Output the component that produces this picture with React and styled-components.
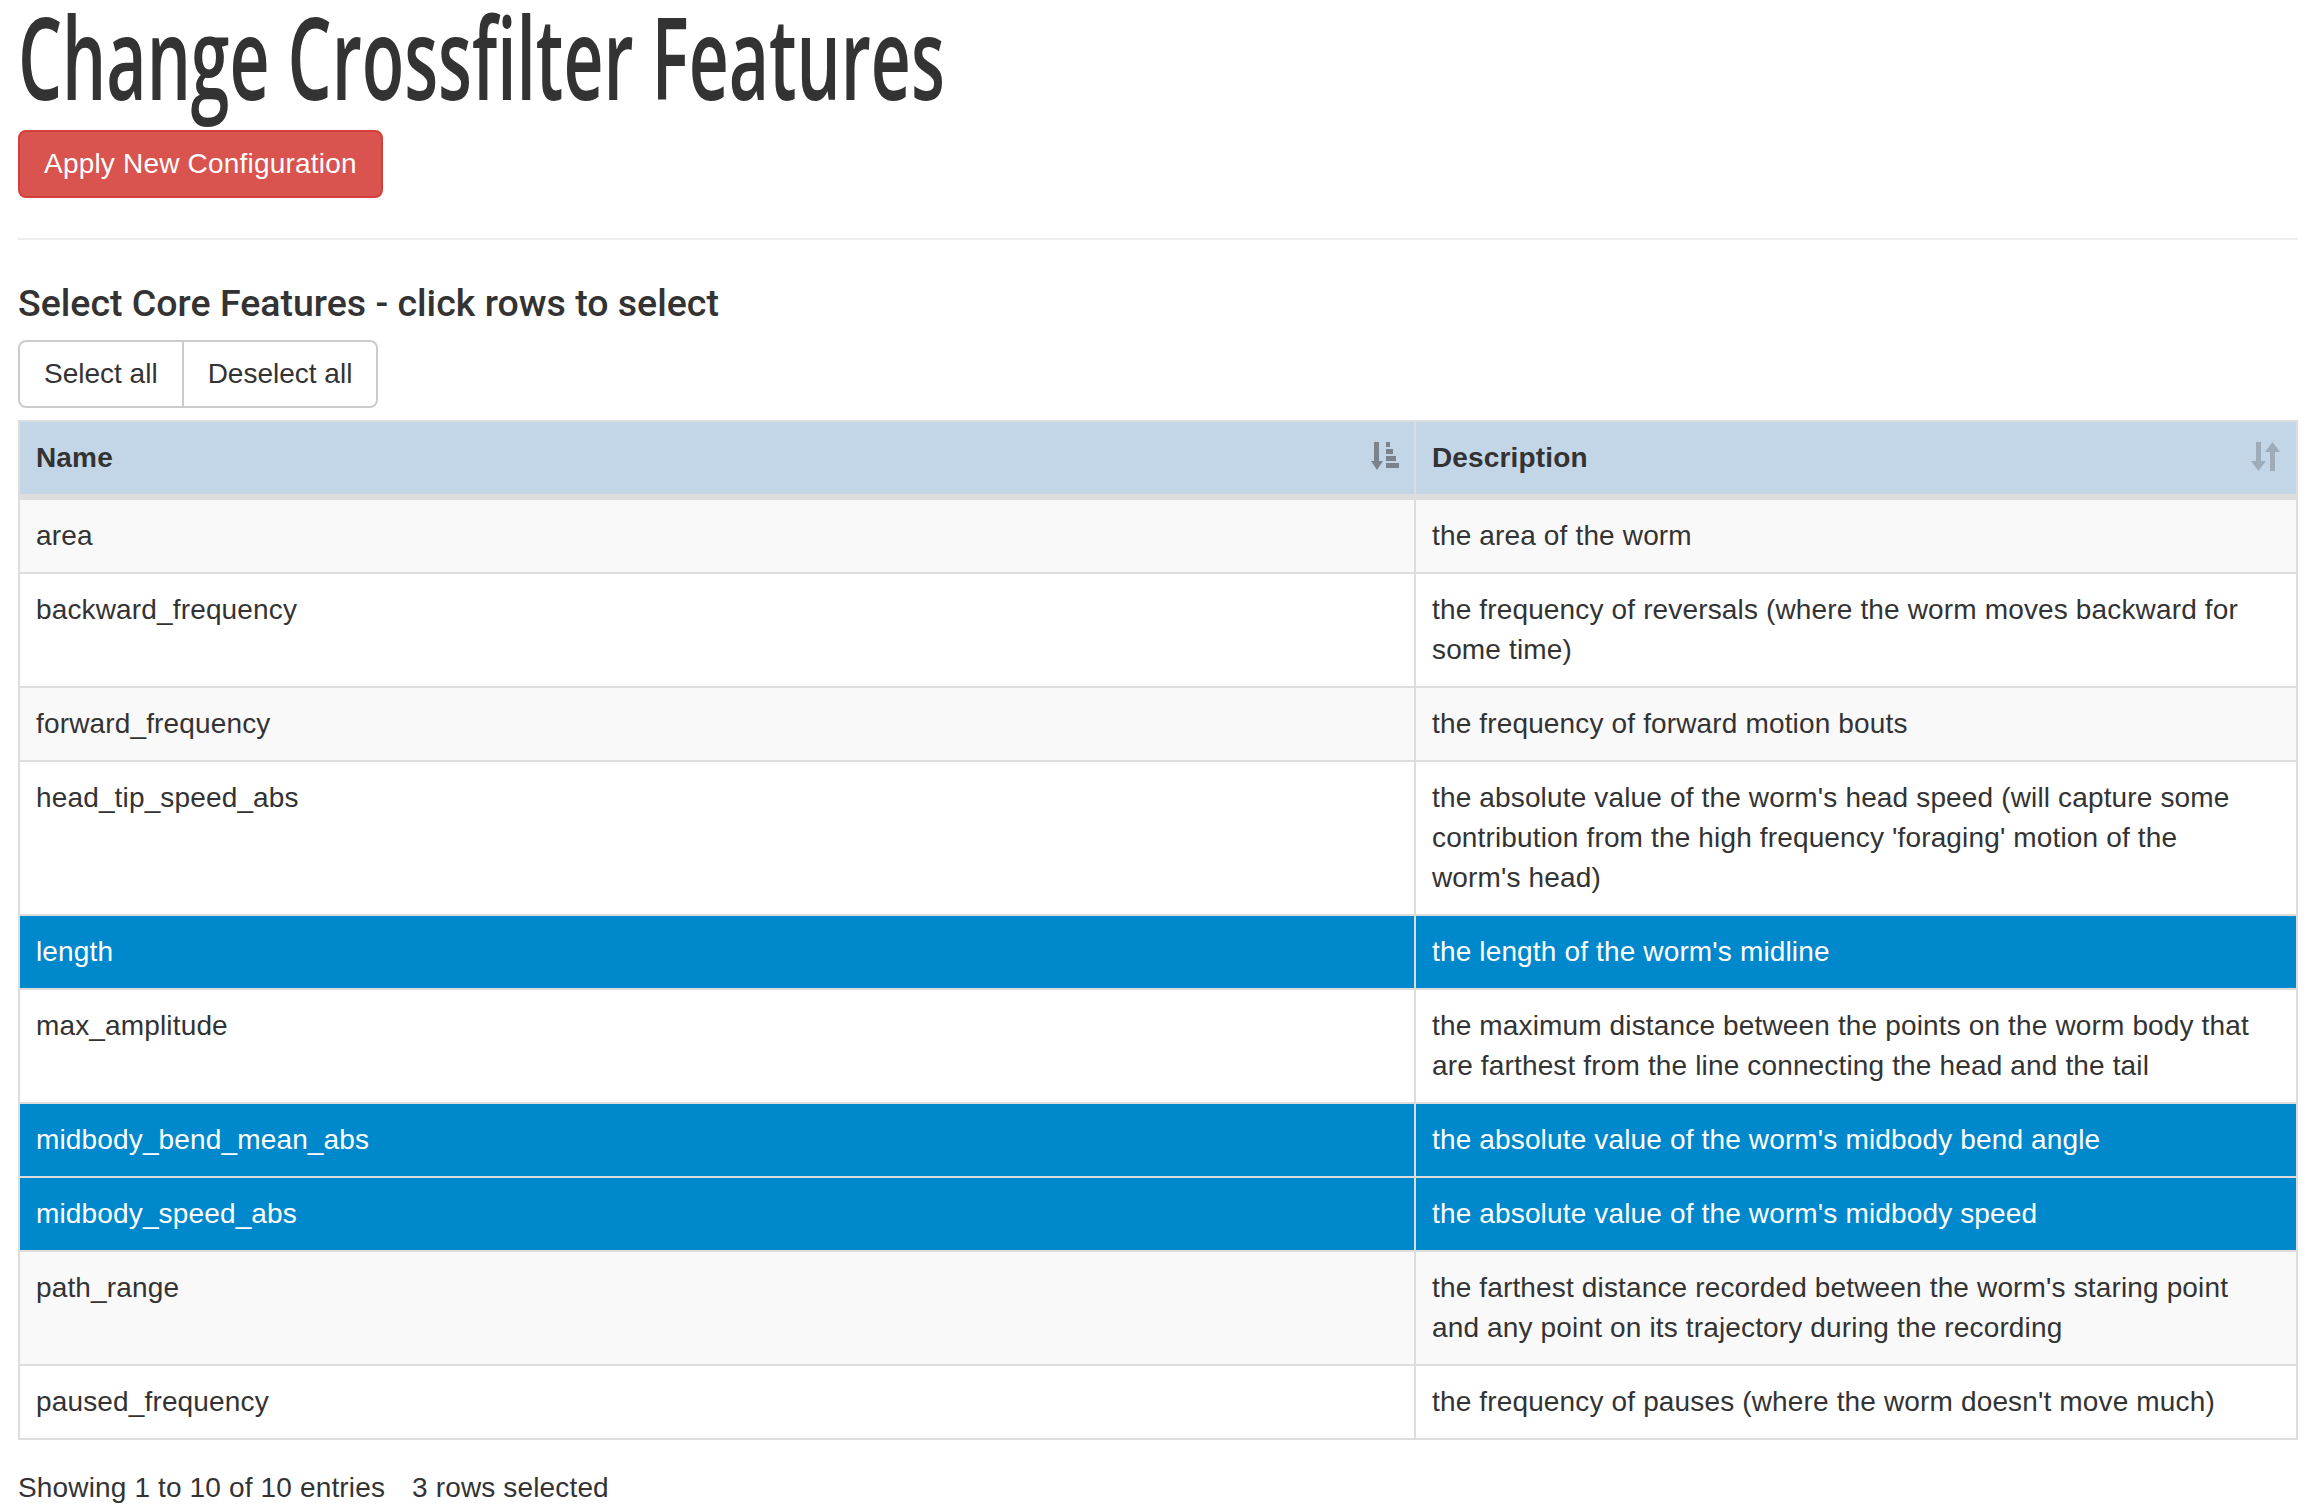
import React, { useState } from 'react';
import styled, { createGlobalStyle } from 'styled-components';

const GlobalStyle = createGlobalStyle`
  html, body {
    margin: 0;
    padding: 0;
    background: #fff;
  }
  body {
    font-family: 'Liberation Sans', Arial, sans-serif;
    font-size: 28px;
    line-height: 40px;
    letter-spacing: 0.15px;
    color: #333;
  }
  * {
    box-sizing: border-box;
  }
`;

const features = [
    { name: 'area', description: 'the area of the worm' },
    { name: 'backward_frequency', description: 'the frequency of reversals (where the worm moves backward for some time)' },
    { name: 'forward_frequency', description: 'the frequency of forward motion bouts' },
    { name: 'head_tip_speed_abs', description: "the absolute value of the worm's head speed (will capture some contribution from the high frequency 'foraging' motion of the worm's head)" },
    { name: 'length', description: "the length of the worm's midline" },
    { name: 'max_amplitude', description: 'the maximum distance between the points on the worm body that are farthest from the line connecting the head and the tail' },
    { name: 'midbody_bend_mean_abs', description: "the absolute value of the worm's midbody bend angle" },
    { name: 'midbody_speed_abs', description: "the absolute value of the worm's midbody speed" },
    { name: 'path_range', description: "the farthest distance recorded between the worm's staring point and any point on its trajectory during the recording" },
    { name: 'paused_frequency', description: "the frequency of pauses (where the worm doesn't move much)" },
];

const SortAttrIcon = () => (
    <svg width="29" height="29" viewBox="0 0 29 29" fill="#333">
        <rect x="4" y="0" width="5" height="20" />
        <polygon points="1,19 13,19 7,28" />
        <rect x="16" y="0" width="4" height="5" />
        <rect x="16" y="7" width="7" height="5" />
        <rect x="16" y="14" width="10" height="5" />
        <rect x="16" y="21" width="13" height="5" />
    </svg>
);

const SortIcon = () => (
    <svg width="29" height="29" viewBox="0 0 29 29" fill="#333">
        <rect x="5" y="0" width="5" height="20" />
        <polygon points="0,19 15,19 7.5,29" />
        <rect x="19" y="9" width="5" height="20" />
        <polygon points="14,10 29,10 21.5,0" />
    </svg>
);

const Features = () => {
    const [selected, setSelected] = useState(['length', 'midbody_bend_mean_abs', 'midbody_speed_abs']);

    const toggle = (name) => {
        setSelected((s) => (s.includes(name) ? s.filter((n) => n !== name) : [...s, name]));
    };

    return (
        <Page>
            <Title>Change Crossfilter Features</Title>
            <DangerButton>Apply New Configuration</DangerButton>
            <Rule />
            <SectionTitle>Select Core Features - click rows to select</SectionTitle>
            <ButtonGroup>
                <GroupButton onClick={() => setSelected(features.map((f) => f.name))}>Select all</GroupButton>
                <GroupButton onClick={() => setSelected([])}>Deselect all</GroupButton>
            </ButtonGroup>
            <Table>
                <thead>
                    <tr>
                        <Th $width="1394px">
                            Name
                            <SortMark $opacity={0.5} $right="15px"><SortAttrIcon /></SortMark>
                        </Th>
                        <Th $divider>
                            Description
                            <SortMark $opacity={0.25} $right="16px"><SortIcon /></SortMark>
                        </Th>
                    </tr>
                </thead>
                <tbody>
                    {features.map((f, i) => {
                        const isSel = selected.includes(f.name);
                        return (
                            <Row key={f.name} $odd={i % 2 === 0} $selected={isSel} onClick={() => toggle(f.name)}>
                                <Td>{f.name}</Td>
                                <Td $divider>{f.description}</Td>
                            </Row>
                        );
                    })}
                </tbody>
            </Table>
            <Info>
                Showing 1 to 10 of 10 entries
                <SelectInfo>{selected.length} rows selected</SelectInfo>
            </Info>
        </Page>
    );
};

const Page = styled.div`
  padding: 0 20px 0 18px;
`;

const Title = styled.h1`
  width: fit-content;
  margin: 0 0 19px;
  font-family: 'Open Sans', 'Liberation Sans', sans-serif;
  font-weight: 600;
  font-size: 115px;
  line-height: 111px;
  letter-spacing: 0;
  color: #333;
  white-space: nowrap;
  transform: scaleX(0.605);
  transform-origin: left center;
`;

const DangerButton = styled.button`
  display: inline-block;
  padding: 12px 24px;
  font-family: 'Liberation Sans', Arial, sans-serif;
  font-size: 28px;
  line-height: 40px;
  letter-spacing: 0.2px;
  color: #fff;
  background: #d9534f;
  border: 2px solid #d43f3a;
  border-radius: 8px;
  cursor: pointer;

  &:hover {
    background: #c9302c;
  }
`;

const Rule = styled.hr`
  margin: 40px 0 0;
  border: 0;
  border-top: 2px solid #eee;
`;

const SectionTitle = styled.h4`
  margin: 43px 0 17px;
  font-family: Roboto, 'Liberation Sans', sans-serif;
  font-size: 37.5px;
  line-height: 40px;
  font-weight: 500;
  letter-spacing: 0;
  color: #333;
`;

const ButtonGroup = styled.div`
  display: flex;
  margin-bottom: 12px;
`;

const GroupButton = styled.button`
  padding: 12px 24px;
  font-family: 'Liberation Sans', Arial, sans-serif;
  font-size: 28px;
  line-height: 40px;
  letter-spacing: 0;
  color: #333;
  background: #fff;
  border: 2px solid #ccc;
  cursor: pointer;

  &:first-child {
    border-radius: 8px 0 0 8px;
  }
  & + & {
    margin-left: -2px;
    border-radius: 0 8px 8px 0;
  }
  &:hover {
    background: #e6e6e6;
  }
`;

const Table = styled.table`
  width: 100%;
  table-layout: fixed;
  border-collapse: separate;
  border-spacing: 0;
  border: 2px solid #ddd;
  margin-bottom: 12px;
`;

const Th = styled.th`
  position: relative;
  width: ${(p) => p.$width || 'auto'};
  padding: 16px 60px 16px 16px;
  text-align: left;
  vertical-align: bottom;
  font-weight: bold;
  background: #c3d6e8;
  border-bottom: 4px solid #ddd;
  border-left: ${(p) => (p.$divider ? '2px solid #ddd' : '0')};
`;

const SortMark = styled.span`
  position: absolute;
  top: 20px;
  right: ${(p) => p.$right};
  opacity: ${(p) => p.$opacity};
  line-height: 0;
`;

const Row = styled.tr`
  cursor: pointer;
  background: ${(p) => (p.$selected ? '#0088cc' : p.$odd ? '#f9f9f9' : '#fff')};
  color: ${(p) => (p.$selected ? '#fff' : '#333')};
`;

const Td = styled.td`
  padding: 16px ${(p) => (p.$divider ? '38px' : '16px')} 16px 16px;
  vertical-align: top;
  border-top: 2px solid #ddd;
  border-left: ${(p) => (p.$divider ? '2px solid #ddd' : '0')};
`;

const Info = styled.div`
  padding-top: 16px;
  white-space: nowrap;
`;

const SelectInfo = styled.span`
  margin-left: 27px;
`;

const App = () => (
    <>
        <GlobalStyle />
        <Features />
    </>
);

export default App;
